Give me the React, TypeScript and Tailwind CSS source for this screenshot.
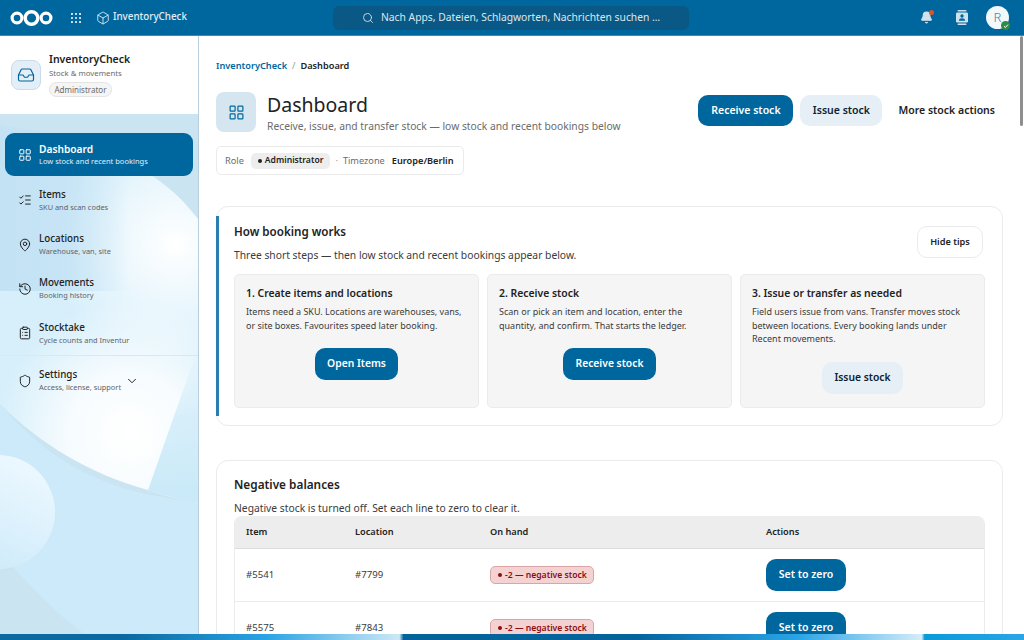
import { Bell, Box, ChevronDown, ClipboardList, History, Inbox, LayoutGrid, ListChecks, MapPin, Search, Shield } from "lucide-react";

const NAV = [
  { label: "Items", sub: "SKU and scan codes", Icon: ListChecks },
  { label: "Locations", sub: "Warehouse, van, site", Icon: MapPin },
  { label: "Movements", sub: "Booking history", Icon: History },
  { label: "Stocktake", sub: "Cycle counts and Inventur", Icon: ClipboardList },
];

const ROWS = [
  { item: "#5541", location: "#7799" },
  { item: "#5575", location: "#7843" },
];

const GLOW_SHAPE = "M0 10 C70 25 150 40 198 105 L198 388 C180 385 165 382 148 376 C90 360 40 330 0 290 Z";

function Wallpaper() {
  return (
    <svg className="absolute inset-0 w-full h-full" viewBox="0 0 198 520" preserveAspectRatio="none">
      <defs>
        <radialGradient id="glowLow" gradientUnits="userSpaceOnUse" cx="130" cy="320" r="135">
          <stop offset="0" stopColor="#ffffff" />
          <stop offset="0.45" stopColor="#ffffff" stopOpacity="0.8" />
          <stop offset="1" stopColor="#ffffff" stopOpacity="0" />
        </radialGradient>
        <radialGradient id="glowHigh" gradientUnits="userSpaceOnUse" cx="175" cy="130" r="125">
          <stop offset="0" stopColor="#ffffff" />
          <stop offset="1" stopColor="#ffffff" stopOpacity="0" />
        </radialGradient>
        <linearGradient id="leftBlock" x1="0" y1="0" x2="1" y2="0">
          <stop offset="0" stopColor="#c3e2f4" />
          <stop offset="0.5" stopColor="#c3e2f4" stopOpacity="0.85" />
          <stop offset="1" stopColor="#c3e2f4" stopOpacity="0" />
        </linearGradient>
        <linearGradient id="wedge" x1="0" y1="1" x2="0" y2="0">
          <stop offset="0" stopColor="#c9e9f8" />
          <stop offset="0.55" stopColor="#c9e9f8" stopOpacity="0.7" />
          <stop offset="1" stopColor="#c9e9f8" stopOpacity="0" />
        </linearGradient>
        <linearGradient id="disc" x1="0.8" y1="0" x2="0.3" y2="1">
          <stop offset="0" stopColor="#eef9ff" />
          <stop offset="1" stopColor="#cdeafa" />
        </linearGradient>
      </defs>
      <rect width="198" height="520" fill="#cbe4f2" />
      <path d="M0 290 C60 360 120 380 198 388 L198 520 L85 520 C55 500 30 470 0 440 Z" fill="#cdeafa" />
      <path d={GLOW_SHAPE} fill="#d6effb" />
      <path d={GLOW_SHAPE} fill="url(#glowLow)" />
      <path d={GLOW_SHAPE} fill="url(#glowHigh)" />
      <path d="M0 10 C40 18 90 26 130 42 L130 177 L0 177 Z" fill="url(#leftBlock)" />
      <path d="M148 376 L198 234 L198 388 C180 385 165 382 148 376 Z" fill="url(#wedge)" />
      <circle cx="-2" cy="398" r="57" fill="url(#disc)" />
    </svg>
  );
}

function Logo() {
  return (
    <svg width="44" height="20" viewBox="0 0 44 20" fill="none" stroke="white">
      <circle cx="7" cy="10" r="4.9" strokeWidth="3.2" />
      <circle cx="21.5" cy="10" r="6.3" strokeWidth="3.4" />
      <circle cx="36" cy="10" r="4.9" strokeWidth="3.2" />
    </svg>
  );
}

function AppsGrid() {
  return (
    <svg width="10" height="10" viewBox="0 0 10 10" fill="#e6f0f6">
      {[1, 5, 9].map((y) =>
        [1, 5, 9].map((x) => <circle key={`${x}-${y}`} cx={x} cy={y} r="1.05" />)
      )}
    </svg>
  );
}

function ContactsIcon() {
  return (
    <svg width="12" height="15" viewBox="0 0 12 15" fill="#cfe1ec">
      <rect x="1.5" y="0" width="9" height="1.4" rx="0.7" />
      <rect x="1.5" y="13.6" width="9" height="1.4" rx="0.7" />
      <rect x="0" y="2.6" width="12" height="9.8" rx="1.2" />
      <circle cx="6" cy="6" r="1.7" fill="#00679e" />
      <path d="M2.8 10.8c0-1.7 1.4-2.5 3.2-2.5s3.2.8 3.2 2.5z" fill="#00679e" />
    </svg>
  );
}

function Topbar() {
  return (
    <header className="h-[36px] shrink-0 bg-[#00679e] border-b border-[#3d8ab5] flex items-center pl-[10px] pr-[15px] relative">
      <Logo />
      <div className="ml-[17px]"><AppsGrid /></div>
      <Box size={14} strokeWidth={1.5} className="ml-[15px] text-[#e6f0f6]" />
      <span className="ml-[3px] text-[9.8px] font-medium text-[#e3eef5]">InventoryCheck</span>
      <div className="absolute left-[333px] top-[6px] w-[356px] h-[24px] rounded-[6px] bg-[#0a5885] flex items-center pl-[29px] text-[#dbe8f0]">
        <Search size={12} strokeWidth={1.7} />
        <span className="ml-[7px] text-[10.3px] whitespace-nowrap">Nach Apps, Dateien, Schlagworten, Nachrichten suchen …</span>
      </div>
      <div className="ml-auto flex items-center">
        <div className="relative mr-[23px]">
          <Bell size={13} fill="#cfe1ec" stroke="#cfe1ec" />
          <span className="absolute top-[-1px] right-[-1px] w-[5px] h-[5px] rounded-full bg-[#d9542f]" />
        </div>
        <div className="mr-[18px]"><ContactsIcon /></div>
        <div className="relative w-[23px] h-[23px] rounded-full bg-[#f3f8fb] flex items-center justify-center text-[13px] font-light text-[#3d87ab]">
          R
          <span className="absolute right-[-1px] bottom-[-1px] w-[9px] h-[9px] rounded-full bg-[#2e8b45] flex items-center justify-center">
            <svg width="6" height="6" viewBox="0 0 6 6" fill="none" stroke="white" strokeWidth="1">
              <path d="M1 3.2 2.4 4.5 5 1.6" />
            </svg>
          </span>
        </div>
      </div>
    </header>
  );
}

function Sidebar() {
  return (
    <aside className="w-[199px] shrink-0 border-r border-[#b9cfdd] flex flex-col">
      <div className="h-[78px] shrink-0 bg-white flex items-start pl-[11px] pt-[16px] gap-[8px]">
        <div className="mt-[8px] w-[30px] h-[30px] rounded-[8px] bg-[#e3eef6] border border-[#c9dcea] flex items-center justify-center text-[#00679e]">
          <Inbox size={18} strokeWidth={1.6} />
        </div>
        <div>
          <p className="text-[10.5px] leading-[15px] font-semibold text-[#222]">InventoryCheck</p>
          <p className="text-[7.8px] leading-[13px] text-[#6b6b6b]">Stock &amp; movements</p>
          <span className="block w-fit mt-[2px] px-[4.5px] h-[15px] leading-[13px] rounded-full border border-[#e4e4e4] bg-[#f5f5f5] text-[8px] text-[#6b6b6b]">Administrator</span>
        </div>
      </div>
      <div className="relative flex-1 overflow-hidden">
        <Wallpaper />
        <nav className="relative pt-[19px] px-[5px]">
          <a className="h-[43px] rounded-[9px] bg-[#00679e] text-white flex items-center pl-[13px] gap-[7px]">
            <LayoutGrid size={14} strokeWidth={1.7} />
            <span>
              <span className="block text-[10.2px] leading-[13px] font-semibold mt-[1px]">Dashboard</span>
              <span className="block text-[7.5px] leading-[11px] text-[#e0edf4]">Low stock and recent bookings</span>
            </span>
          </a>
          <ul className="mt-[2px]">
            {NAV.map(({ label, sub, Icon }) => (
              <li key={label} className="h-[44.4px] flex items-center pl-[13px] gap-[7px] text-[#222]">
                <Icon size={14} strokeWidth={1.7} />
                <span>
                  <span className="block text-[9.8px] leading-[13px] font-medium">{label}</span>
                  <span className="block text-[7.4px] leading-[12px] text-[#5f6368]">{sub}</span>
                </span>
              </li>
            ))}
          </ul>
          <div className="-mt-[1px] -mx-[5px] border-t border-[#dfe7ec]" />
          <div className="h-[50px] flex items-center pl-[13px] gap-[7px] text-[#222]">
            <Shield size={14} strokeWidth={1.7} />
            <span>
              <span className="block text-[9.8px] leading-[13px] font-medium">Settings</span>
              <span className="block text-[7.4px] leading-[12px] text-[#5f6368]">Access, license, support</span>
            </span>
            <ChevronDown size={14} strokeWidth={1.7} className="-ml-[3px]" />
          </div>
        </nav>
      </div>
    </aside>
  );
}

function Step({ title, lines, action, primary }: { title: string; lines: string[]; action: string; primary?: boolean }) {
  return (
    <div className="h-[134px] rounded-[5px] bg-[#f5f5f5] border border-[#ebebeb] px-[11px] pt-[11px] flex flex-col">
      <h3 className="text-[10.4px] leading-[15px] font-semibold text-[#222]">{title}</h3>
      <div className="mt-[4px] text-[9px] leading-[13.6px] text-[#3b3b3b] whitespace-nowrap">
        {lines.map((l) => <p key={l}>{l}</p>)}
      </div>
      <div className="mt-[16px] flex justify-center">
        {primary ? (
          <button className="h-[32px] px-[12.5px] rounded-[10px] bg-[#00679e] text-white text-[10.3px] font-semibold">{action}</button>
        ) : (
          <button className="h-[32px] px-[12.5px] rounded-[10px] bg-[#e6eff5] text-[#0b2233] text-[10.3px] font-semibold">{action}</button>
        )}
      </div>
    </div>
  );
}

export default function App() {
  return (
    <div className="h-screen overflow-hidden flex flex-col bg-white font-['Noto_Sans',sans-serif] relative">
      <Topbar />
      <div className="flex-1 flex min-h-0">
        <Sidebar />
        <main className="flex-1 min-w-0 overflow-hidden bg-white pl-[17px] pr-[21px]">
          <nav className="mt-[23px] h-[14px] flex items-center text-[9.2px] font-semibold">
            <span className="text-[#00679e]">InventoryCheck</span>
            <span className="mx-[5px] text-[#9a9a9a] font-normal">/</span>
            <span className="text-[#222]">Dashboard</span>
          </nav>

          <div className="mt-[19px] flex items-start">
            <div className="w-[40px] h-[40px] rounded-[8px] bg-[#d5e6f1] flex items-center justify-center text-[#00679e]">
              <LayoutGrid size={17} strokeWidth={1.7} />
            </div>
            <div className="ml-[11px]">
              <h1 className="text-[19.5px] leading-[26px] text-[#222]">Dashboard</h1>
              <p className="mt-[1px] text-[10.3px] leading-[15px] text-[#6b6b6b] whitespace-nowrap">Receive, issue, and transfer stock — low stock and recent bookings below</p>
            </div>
            <div className="ml-auto mt-[3px] flex items-center">
              <button className="w-[95px] h-[31px] rounded-[10px] bg-[#00679e] text-white text-[10.5px] font-semibold">Receive stock</button>
              <button className="ml-[7px] w-[82px] h-[31px] rounded-[10px] bg-[#e6eff5] text-[#0b2233] text-[10.5px] font-semibold">Issue stock</button>
              <button className="ml-[16px] mr-[8px] text-[10.5px] font-semibold text-[#222]">More stock actions</button>
            </div>
          </div>

          <div className="mt-[12px] w-[248px] h-[29px] rounded-[5px] border border-[#ebebeb] flex items-center pl-[8px] text-[9.2px] whitespace-nowrap">
            <span className="text-[#6b6b6b]">Role</span>
            <span className="ml-[7px] h-[16px] px-[7px] rounded-[5px] bg-[#ededed] flex items-center gap-[3px] text-[8.6px] font-semibold text-[#222]">
              <span className="w-[4px] h-[4px] rounded-full bg-[#222]" />
              Administrator
            </span>
            <span className="mx-[5px] text-[#9a9a9a]">·</span>
            <span className="text-[#6b6b6b]">Timezone</span>
            <span className="ml-[7px] font-semibold text-[#222]">Europe/Berlin</span>
          </div>

          <section className="relative mt-[31px] h-[220px] rounded-[12px] border border-[#ebebeb] px-[17px] pt-[17px]">
            <span className="absolute left-[-1px] top-[9px] bottom-[9px] w-[3px] bg-[#2a7fb0]" />
            <div className="flex items-start">
              <div>
                <h2 className="text-[11.6px] leading-[15px] font-semibold text-[#222]">How booking works</h2>
                <p className="mt-[9px] text-[10.3px] leading-[15px] text-[#3b3b3b]">Three short steps — then low stock and recent bookings appear below.</p>
              </div>
              <button className="ml-auto mr-[2px] mt-[2px] w-[66px] h-[32px] rounded-[10px] bg-white border border-[#ebebeb] text-[9.2px] font-semibold text-[#222]">Hide tips</button>
            </div>
            <div className="mt-[11px] grid grid-cols-3 gap-[8px]">
              <Step title="1. Create items and locations" lines={["Items need a SKU. Locations are warehouses, vans,", "or site boxes. Favourites speed later booking."]} action="Open Items" primary />
              <Step title="2. Receive stock" lines={["Scan or pick an item and location, enter the", "quantity, and confirm. That starts the ledger."]} action="Receive stock" primary />
              <Step title="3. Issue or transfer as needed" lines={["Field users issue from vans. Transfer moves stock", "between locations. Every booking lands under", "Recent movements."]} action="Issue stock" />
            </div>
          </section>

          <section className="mt-[34px] rounded-[12px] border border-[#ebebeb] px-[17px] pt-[16px]">
            <h2 className="text-[11.8px] leading-[15px] font-semibold text-[#222]">Negative balances</h2>
            <p className="mt-[9px] text-[10.3px] leading-[15px] text-[#3b3b3b]">Negative stock is turned off. Set each line to zero to clear it.</p>
            <div className="rounded-t-[8px] border-x border-[#ebebeb] overflow-hidden">
              <div className="h-[33px] bg-[#ededed] border-b border-[#dcdcdc] grid grid-cols-[109px_135px_276px_1fr] items-center pl-[11px] text-[9.2px] font-semibold text-[#222]">
                <span>Item</span>
                <span>Location</span>
                <span>On hand</span>
                <span>Actions</span>
              </div>
              {ROWS.map((r) => (
                <div key={r.item} className="h-[53px] border-b border-[#ebebeb] grid grid-cols-[109px_135px_276px_1fr] items-center pl-[11px] text-[9.6px] text-[#3b3b3b]">
                  <span>{r.item}</span>
                  <span>{r.location}</span>
                  <span>
                    <span className="inline-flex items-center gap-[3px] h-[18px] w-[104px] pl-[7px] rounded-[5px] bg-[#f4d2d2] border border-[#dba5a5] text-[8.6px] font-semibold text-[#8b0d12] whitespace-nowrap">
                      <span className="w-[4px] h-[4px] rounded-full bg-[#8b0d12]" />
                      -2 — negative stock
                    </span>
                  </span>
                  <span>
                    <button className="w-[80px] h-[32px] rounded-[10px] bg-[#00679e] text-white text-[10.5px] font-semibold">Set to zero</button>
                  </span>
                </div>
              ))}
            </div>
          </section>
        </main>
      </div>
      <div className="h-[6px] shrink-0 bg-[linear-gradient(90deg,#0a69a0_0%,#0a69a0_12%,#2aa3e4_26%,#cde8f6_39%,#05639c_39.4%,#05639c_62%,#2aa5e6_78%,#d5ecf8_90%,#0a9ad8_90.3%,#2aa5e6_100%)]" />
      <span className="absolute right-[1px] top-[36px] w-[3px] h-[90px] bg-[#8f8f8f] rounded-full" />
    </div>
  );
}
